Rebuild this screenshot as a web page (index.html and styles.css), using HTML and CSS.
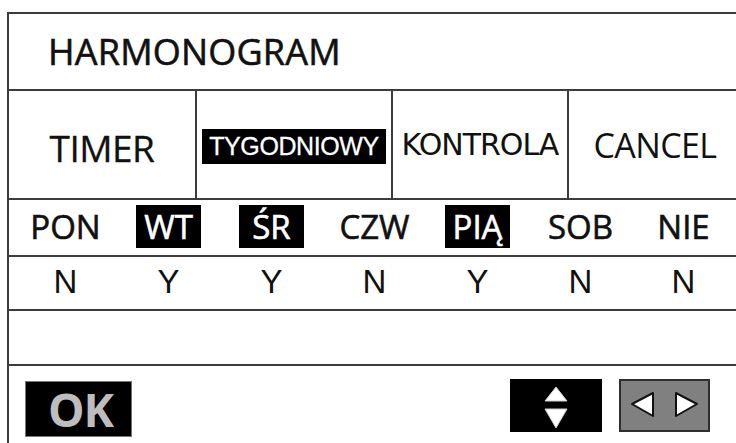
FILE: index.html
```html
<!DOCTYPE html>
<html lang="pl">
<head>
    <meta charset="UTF-8">
    <meta name="viewport" content="width=device-width, initial-scale=1.0">
    <title>Harmonogram</title>
    <link rel="stylesheet" href="styles.css">
</head>
<body>
    <div class="screen">
        <div class="row title-row">
            <h1 class="title">HARMONOGRAM</h1>
        </div>

        <div class="row tab-row">
            <div class="tab tab-timer">TIMER</div>
            <div class="tab tab-weekly"><span class="selected-tab">TYGODNIOWY</span></div>
            <div class="tab tab-control">KONTROLA</div>
            <div class="tab tab-cancel">CANCEL</div>
        </div>

        <div class="row days-row">
            <div class="day">PON</div>
            <div class="day"><span class="day-on">WT</span></div>
            <div class="day"><span class="day-on">ŚR</span></div>
            <div class="day">CZW</div>
            <div class="day"><span class="day-on">PIĄ</span></div>
            <div class="day">SOB</div>
            <div class="day">NIE</div>
        </div>

        <div class="row flags-row">
            <div class="flag">N</div>
            <div class="flag">Y</div>
            <div class="flag">Y</div>
            <div class="flag">N</div>
            <div class="flag">Y</div>
            <div class="flag">N</div>
            <div class="flag">N</div>
        </div>

        <div class="row empty-row"></div>

        <div class="bottom-row">
            <button class="ok-btn">OK</button>
            <div class="spacer"></div>
            <button class="nav-btn updown-btn">
                <svg width="92" height="53" viewBox="0 0 92 53">
                    <polygon points="46,8 57,22 35,22" fill="#fff" stroke="#ccc" stroke-width="1"/>
                    <polygon points="35,30 57,30 46,49" fill="#fff" stroke="#ccc" stroke-width="1"/>
                </svg>
            </button>
            <button class="nav-btn leftright-btn">
                <svg width="87" height="49" viewBox="0 0 87 49">
                    <polygon points="11,23 32,12 32,35" fill="#fff" stroke="#111" stroke-width="2" stroke-linejoin="round"/>
                    <polygon points="55,12 55,35 76,23" fill="#fff" stroke="#111" stroke-width="2" stroke-linejoin="round"/>
                </svg>
            </button>
        </div>
    </div>
</body>
</html>
```

FILE: styles.css
```css
body {
    margin: 0;
    padding: 0;
    background: #fff;
    overflow: hidden;
    font-family: "Open Sans", sans-serif;
    color: #111;
}

.screen {
    margin: 12px 0 0 7px;
    width: 740px;
    height: 431px;
    border-top: 2px solid #3c3c3c;
    border-left: 2px solid #3c3c3c;
    display: flex;
    flex-direction: column;
}

.row {
    border-bottom: 2px solid #3c3c3c;
    display: flex;
    align-items: center;
}

/* title */
.title-row {
    height: 75px;
    padding-left: 39px;
}

.title {
    margin: 0;
    font-weight: 400;
    font-size: 36px;
    letter-spacing: 0.2px;
    -webkit-text-stroke: 0.6px #111;
}

/* tabs */
.tab-row {
    height: 107px;
    align-items: stretch;
}

.tab {
    display: flex;
    align-items: center;
    justify-content: center;
    border-right: 2px solid #3c3c3c;
}

.tab-timer {
    width: 186px;
    font-size: 37px;
    padding-top: 6px;
    letter-spacing: -0.5px;
    -webkit-text-stroke: 0.3px #111;
}

.tab-weekly {
    width: 194px;
    padding-top: 3px;
}

.tab-control {
    width: 174px;
    font-family: "DejaVu Sans", sans-serif;
    font-size: 30px;
    letter-spacing: -1px;
}

.tab-cancel {
    flex: 1;
    border-right: none;
    font-size: 34px;
    letter-spacing: -0.6px;
    padding-right: 8px;
}

.selected-tab {
    display: flex;
    align-items: center;
    justify-content: center;
    width: 184px;
    height: 35px;
    background: #000;
    color: #fff;
    font-family: "Liberation Sans", sans-serif;
    font-size: 25px;
    letter-spacing: -0.4px;
    -webkit-text-stroke: 0.3px #fff;
}

/* week days */
.days-row,
.flags-row {
    padding-left: 5px;
    display: grid;
    grid-template-columns: repeat(7, 103px);
    align-items: center;
}

.days-row {
    height: 55px;
}

.day {
    text-align: center;
    font-size: 33px;
    line-height: 43px;
    height: 43px;
    margin-top: -3px;
    -webkit-text-stroke: 0.6px #111;
}

.day-on {
    display: inline-block;
    background: #000;
    color: #fff;
    min-width: 65px;
    box-sizing: border-box;
    padding: 0 5px;
    -webkit-text-stroke: 0.6px #fff;
}

.flags-row {
    height: 52px;
}

.flag {
    text-align: center;
    font-family: "Liberation Sans", sans-serif;
    font-size: 33px;
    padding-bottom: 3px;
}

.empty-row {
    height: 53px;
}

/* bottom buttons */
.bottom-row {
    flex: 1;
    display: flex;
    align-items: flex-start;
    padding: 13px 39px 0 16px;
}

.spacer {
    flex: 1;
}

button {
    border: none;
    padding: 0;
    margin: 0;
    font: inherit;
}

.ok-btn {
    margin-top: 2px;
    width: 107px;
    height: 56px;
    background: #000;
    color: #bdbdbd;
    font-family: "Open Sans", sans-serif;
    font-weight: 700;
    font-size: 46px;
    letter-spacing: -1px;
    line-height: 54px;
    padding-left: 4px;
    border: 1px solid #777;
}

.nav-btn {
    display: flex;
    align-items: center;
    justify-content: center;
    height: 53px;
}

.nav-btn svg {
    display: block;
}

.updown-btn {
    width: 92px;
    background: #000;
}

.leftright-btn {
    width: 91px;
    margin-left: 17px;
    background: #808080;
    border: 2px solid #2e2e2e;
}
```
